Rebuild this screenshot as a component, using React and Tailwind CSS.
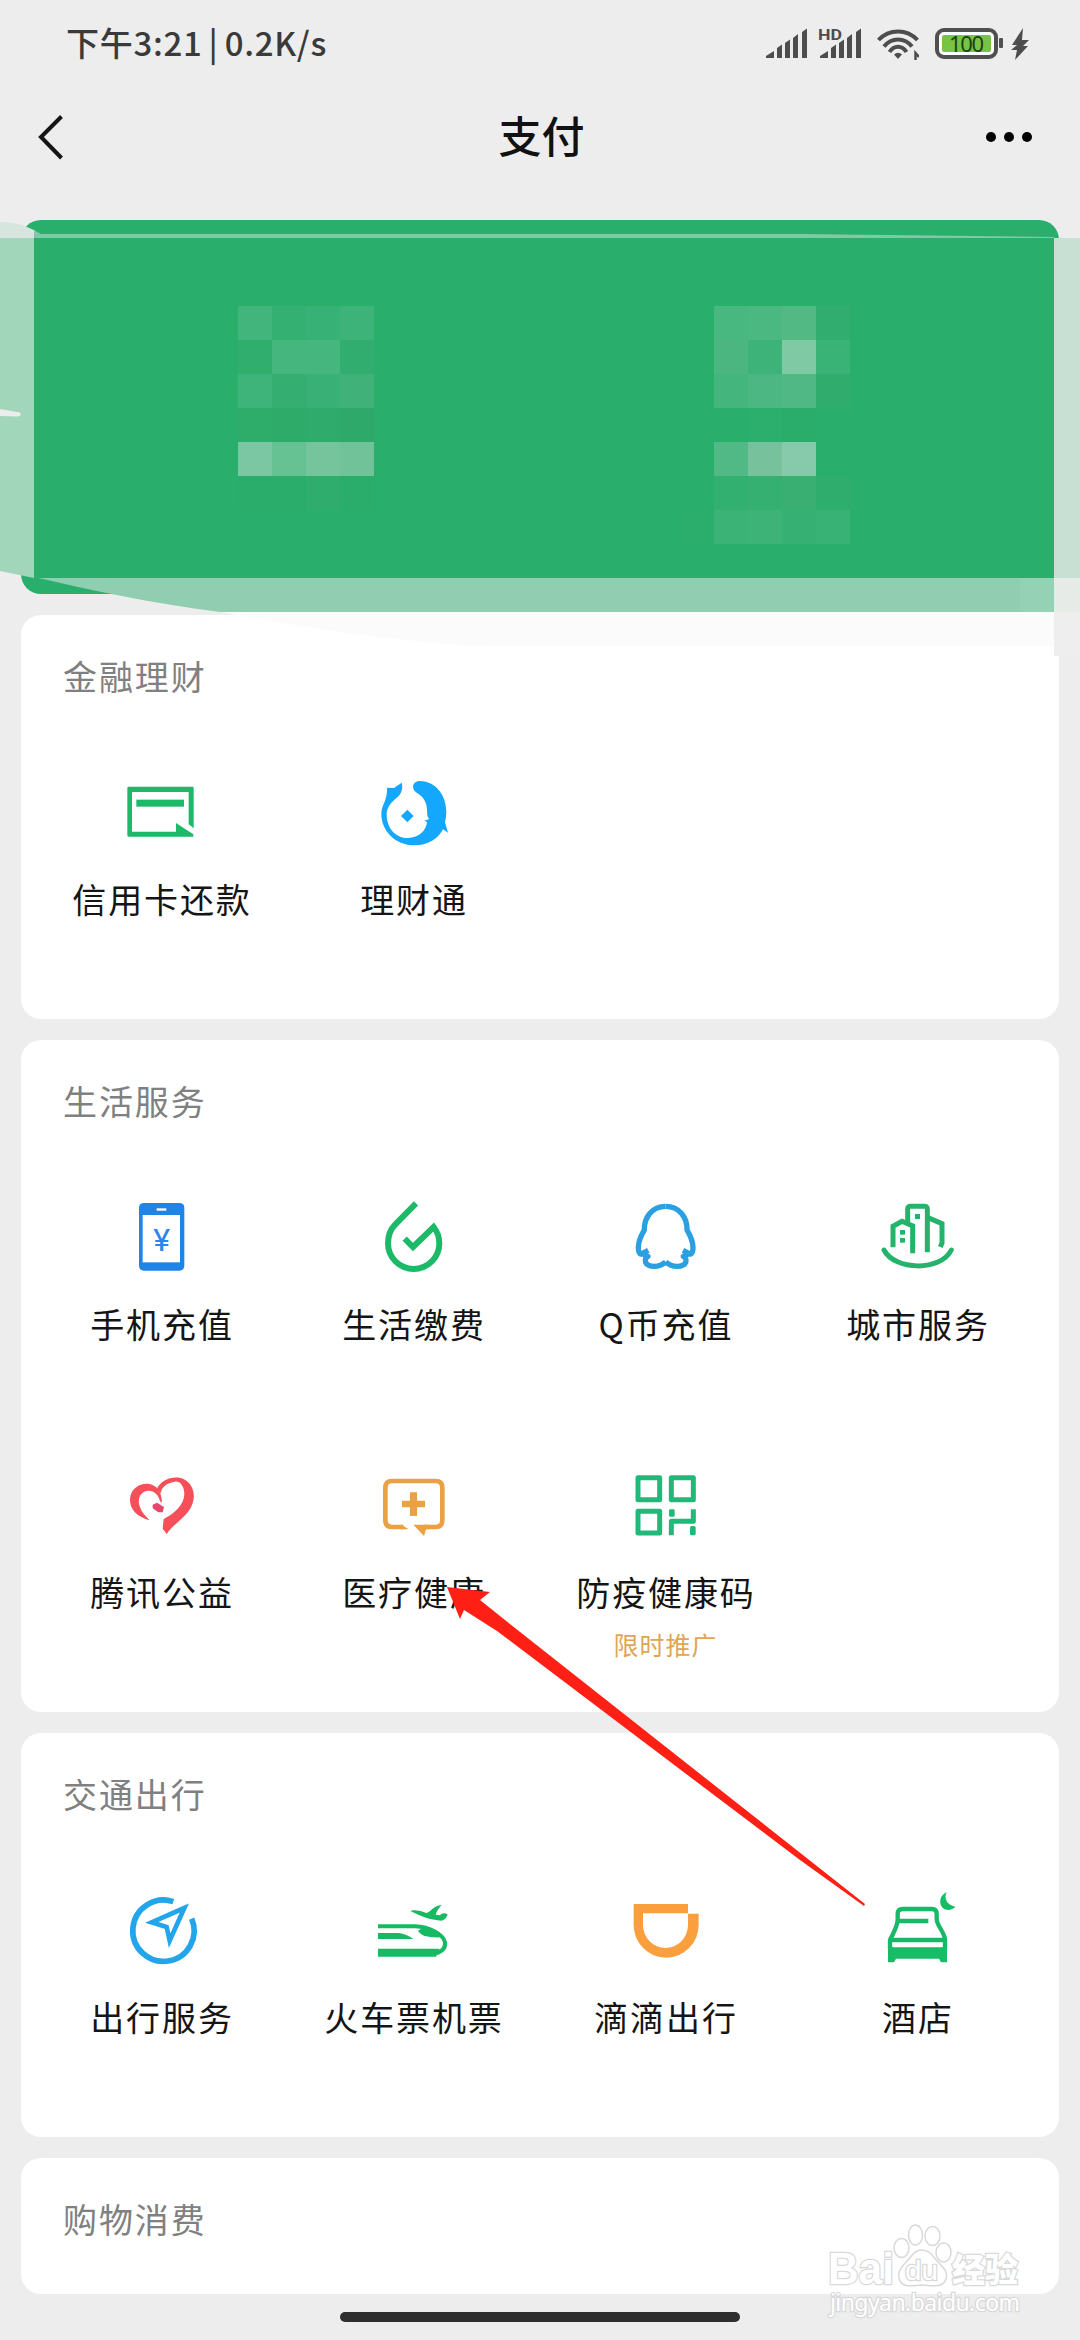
import React from 'react';

const GREEN = '#1bb968';

const CreditCardIcon = () => (
    <svg viewBox="243 399 240 240" className="h-20 w-20" fill={GREEN}>
        <path d="M266 443H458Q461 443 461 447V568L446 556V459H276V578H408V552L460 586V593H266Q262 593 262 589V447Q262 443 266 443Z" />
        <rect x="289" y="482" width="143" height="21" />
    </svg>
);

const WealthIcon = () => (
    <svg viewBox="999 399 240 240" className="h-20 w-20" fill="#13a8fd">
        <path d="M1041 446L1062 447L1085 431C1090 448 1084 464 1072 475C1055 490 1039 503 1040 530C1042 570 1068 597 1104 597C1138 596 1158 575 1161 549L1153 545L1168 540C1159 533 1163 520 1160 502C1155 479 1143 470 1128 460C1113 448 1117 426 1140 426C1190 428 1219 470 1219 520C1219 530 1217 540 1215 550L1224 581L1209 571C1194 601 1162 619 1124 619C1064 618 1024 575 1024 524C1024 498 1043 484 1041 446Z" />
        <path d="M1102 512L1121 531L1102 550L1083 531Z" />
    </svg>
);

const PhoneIcon = () => (
    <svg viewBox="213 411 240 240" className="h-20 w-20">
        <rect x="267" y="429" width="136" height="203" rx="14" fill="#1e84e6" />
        <rect x="278" y="465" width="112" height="142" fill="#fff" />
        <rect x="320" y="445" width="29" height="7" fill="#fff" />
        <text x="335" y="574" textAnchor="middle" fontSize="96" fontWeight="400" fill="#2b84f4" fontFamily="Roboto, sans-serif">¥</text>
    </svg>
);

const UtilityIcon = () => (
    <svg viewBox="969 411 240 240" className="h-20 w-20" fill="none" stroke={GREEN} strokeWidth="18">
        <path d="M1098 430L1036 493C1021 508 1014 528 1014 550A77 77 0 1 0 1168 550C1168 531 1162 515 1151 501L1089 561L1064 536" />
    </svg>
);

const PENGUIN_SIDE = 'M317 79C276 79 252 112 253 150C246 162 235 180 235 203C235 216 239 225 246 221L265 211M246 221L264 229C250 236 252 259 283 259C300 259 309 253 317 246';

const QCoinIcon = () => (
    <svg viewBox="195 51 240 240" className="h-20 w-20" fill="none" stroke="#2a9fe2" strokeWidth="16" strokeLinejoin="round">
        <path d={PENGUIN_SIDE} />
        <path d={PENGUIN_SIDE} transform="translate(634 0) scale(-1 1)" />
    </svg>
);

const CityIcon = () => (
    <svg viewBox="951 51 240 240" className="h-20 w-20" fill="none" stroke="#23b36b" strokeWidth="15">
        <path d="M999 202V139L1026 124L1058 138V220" />
        <path d="M1043 126V88Q1043 79 1052 79H1093Q1102 79 1102 88V217" />
        <path d="M1104 113L1146 131V189L1141 201" />
        <path d="M972 210C1004 272 1142 275 1174 210" strokeLinecap="round" />
        <g fill="#23b36b" stroke="none">
            <rect x="1065" y="102" width="15" height="15" />
            <rect x="1020" y="150" width="15" height="14" />
            <rect x="1020" y="174" width="15" height="14" />
        </g>
    </svg>
);

const CharityIcon = () => (
    <svg viewBox="213 45 240 240" className="h-20 w-20" fill="#f5505a">
        <path d="M299 211C262 200 239 180 240 146C243 115 270 98 298 102C320 106 335 124 336 158L330 154C326 134 312 121 294 122C270 124 263 146 268 165C273 185 285 196 299 211Z" />
        <path d="M320 118C332 90 362 79 388 83C417 88 435 116 431 146C424 197 375 214 350 252L338 236L341 207C374 190 402 165 403 132C403 112 392 92 374 95C350 99 335 111 332 130Z" />
        <path d="M308 164L321 158L342 171L338 187H325L308 175Z" fill="#e5486c" />
    </svg>
);

const MedicalIcon = () => (
    <svg viewBox="969 45 240 240" className="h-20 w-20" fill="#eca044">
        <path d="M1060 231H1026Q1006 231 1006 211V113Q1006 93 1026 93H1157Q1177 93 1177 113V211Q1177 231 1157 231H1122" fill="none" stroke="#eca044" strokeWidth="14" />
        <path d="M1054 224L1076 238H1054Z" />
        <path d="M1090 224H1136V238H1128L1122 258Z" />
        <path d="M1080 127H1101V152H1125V172H1101V198H1080V172H1056V152H1080Z" />
    </svg>
);

const HealthCodeIcon = () => (
    <svg viewBox="255 45 240 240" className="h-20 w-20" fill="none" stroke="#1fba79" strokeWidth="15" strokeLinejoin="round">
        <rect x="294" y="83" width="65" height="66" />
        <rect x="394" y="83" width="66" height="66" />
        <rect x="294" y="184" width="65" height="65" />
        <path d="M394 256V214H460V178" />
        <g fill="#1fba79" stroke="none">
            <rect x="387" y="178" width="17" height="22" rx="4" />
            <rect x="450" y="228" width="17" height="28" rx="5" />
        </g>
    </svg>
);

const TravelIcon = () => (
    <svg viewBox="213 450 240 240" className="h-20 w-20" fill="none" stroke="#22a5ea">
        <path d="M370 485A92 92 0 1 0 425 536" strokeWidth="17" />
        <path d="M403 504L305 547L350 561L359 602Z" strokeWidth="14" />
    </svg>
);

const TrainIcon = () => (
    <svg viewBox="969 450 240 240" className="h-20 w-20" fill="#17ba62">
        <path d="M984 559H1095C1140 560 1179 584 1185 606C1188 624 1176 634 1158 640" fill="none" stroke="#17ba62" strokeWidth="12" />
        <path d="M1104 573C1110 562 1135 563 1150 574L1173 592C1150 593 1116 592 1104 573Z" />
        <path d="M984 579H1046C1062 580 1076 588 1090 597H984Z" />
        <path d="M984 626H1168L1158 650H984Z" />
        <path d="M1081 513C1090 508 1115 512 1129 519C1145 514 1150 497 1175 495C1167 503 1160 514 1157 524L1170 526C1175 519 1184 517 1193 523C1190 533 1184 540 1175 542C1140 540 1110 528 1081 513Z" />
    </svg>
);

const DidiIcon = () => (
    <svg viewBox="195 90 240 240" className="h-20 w-20" fill="#f99f3e">
        <path d="M221 132H384V161H416V195A97.500 98 0 0 1 221 195ZM249 160V195A67.500 69 0 0 0 384 195V160Z" fillRule="evenodd" />
    </svg>
);

const HotelIcon = () => (
    <svg viewBox="951 90 240 240" className="h-20 w-20" fill="none" stroke="#17b868" strokeWidth="13">
        <path d="M990 268V240C1000 218 1013 200 1013 178V162Q1013 147 1028 147H1116Q1130 147 1130 162V178C1132 200 1155 218 1155 240V268" />
        <path d="M1015 183H1105M990 240H1155" />
        <g fill="#17bd66" stroke="none">
            <path d="M984 255L1000 262H1146L1161 255V307H1143L1137 296H1008L1002 307H984Z" />
            <path d="M1160 97C1151 115 1160 136 1186 140C1170 157 1145 151 1141 130C1139 115 1147 102 1160 97Z" />
        </g>
    </svg>
);

const SECTIONS = [
    {
        title: '金融理财',
        items: [
            { label: '信用卡还款', icon: CreditCardIcon },
            { label: '理财通', icon: WealthIcon }
        ]
    },
    {
        title: '生活服务',
        items: [
            { label: '手机充值', icon: PhoneIcon },
            { label: '生活缴费', icon: UtilityIcon },
            { label: 'Q币充值', icon: QCoinIcon },
            { label: '城市服务', icon: CityIcon },
            { label: '腾讯公益', icon: CharityIcon },
            { label: '医疗健康', icon: MedicalIcon },
            { label: '防疫健康码', icon: HealthCodeIcon, note: '限时推广' }
        ]
    },
    {
        title: '交通出行',
        items: [
            { label: '出行服务', icon: TravelIcon },
            { label: '火车票机票', icon: TrainIcon },
            { label: '滴滴出行', icon: DidiIcon },
            { label: '酒店', icon: HotelIcon }
        ]
    },
    { title: '购物消费', items: [] }
];

// Each block is one 34px cell row: x, y and the colours from left to right
const MOSAIC_ROWS = [
    { x: 238, y: 306, colors: ['#41b57b', '#33b072', '#38b176', '#3db379'] },
    { x: 238, y: 340, colors: ['#30ae6e', '#46b67f', '#46b67f', '#31ae6f'] },
    { x: 238, y: 374, colors: ['#3eb47a', '#35ae72', '#39b075', '#40b178'] },
    { x: 238, y: 408, colors: ['#2dac6a', '#2eaa69', '#2fab6b', '#2fa96a'] },
    { x: 238, y: 442, colors: ['#7bc7a4', '#66c193', '#76c49c', '#72c299'] },
    { x: 238, y: 476, colors: ['#2aad6a', '#2aad6a', '#2fad6c', '#2aad6b'] },
    { x: 714, y: 306, colors: ['#48b780', '#4bb781', '#52b985', '#31ae6f'] },
    { x: 714, y: 340, colors: ['#4bb680', '#3db379', '#7fc9a5', '#3ab376'] },
    { x: 714, y: 374, colors: ['#44b57c', '#4cb783', '#4fb884', '#30ad6d'] },
    { x: 748, y: 408, colors: ['#2cae6d', '#2aad6b'] },
    { x: 714, y: 442, colors: ['#51b985', '#77c29c', '#87caab'] },
    { x: 680, y: 476, colors: ['#2aae6c', '#32b070', '#36b071', '#39af72', '#2fad6d'] },
    { x: 680, y: 510, colors: ['#2bad6b', '#3bb276', '#3db377', '#37b173', '#39b275'] }
];

const SignalIcon = ({ hd }) => (
    <svg viewBox="0 0 42 32" className="h-8 w-[42px] overflow-visible" fill="#4d4d4d">
        {hd && (
            <text x="-2" y="12" fontSize="15" fontWeight="700" textLength="24" lengthAdjust="spacingAndGlyphs" fontFamily="Roboto, sans-serif">HD</text>
        )}
        <path d="M0 30V28L8 23V30Z" />
        <path d="M11 30V20L16 16.500V30Z" />
        <path d="M19 30V15L24 11.500V30Z" />
        <path d="M27 30V10L32 6V30Z" />
        <path d="M36 30V4L41 0.500V30Z" />
    </svg>
);

const WifiIcon = () => (
    <svg viewBox="0 0 42 32" className="h-8 w-[42px]" fill="none" stroke="#4d4d4d" strokeWidth="4">
        <path d="M1.500 12C12 0.500 30 0.500 40.500 12" />
        <path d="M7 18.500C14.500 9 27.500 9 35 18.500" />
        <path d="M12.500 24C17 17 25 17 29.500 24" />
        <path d="M17 26.500Q21 23 25 26.500L21 31Z" fill="#4d4d4d" stroke="none" />
        <path d="M38.500 32V25L42 29" strokeWidth="2.500" />
    </svg>
);

const BatteryIcon = () => (
    <svg viewBox="0 0 68 32" className="h-8 w-[68px]">
        <rect x="2" y="2" width="59" height="27" rx="7" fill="#fff" stroke="#505050" strokeWidth="4" />
        <rect x="7" y="7" width="49" height="17" rx="2" fill="#76c442" />
        <rect x="64" y="10" width="4" height="10" rx="1" fill="#505050" />
        <text x="31.500" y="23.500" textAnchor="middle" fontSize="22" textLength="35" fill="#1d3f12" fontFamily="'Noto Sans', sans-serif">100</text>
    </svg>
);

const StatusBar = () => (
    <div className="flex h-[88px] items-center justify-between pl-[66px] pr-[51px]">
        <span className="-mt-[3px] text-[33px] font-medium tracking-[0.7px] text-[#3a3a3a] [word-spacing:-2px]">
            下午3:21 | 0.2K/s
        </span>
        <div className="flex items-center">
            <SignalIcon />
            <div className="ml-3">
                <SignalIcon hd />
            </div>
            <div className="ml-[15px]">
                <WifiIcon />
            </div>
            <div className="ml-4">
                <BatteryIcon />
            </div>
            <svg viewBox="0 0 18 32" className="ml-2 h-8 w-[18px]" fill="#4d4d4d">
                <path d="M12 0L1 17H6L0 22H6L4 32L17 18H12L18 12H11Z" />
            </svg>
        </div>
    </div>
);

const NavBar = () => (
    <div className="mb-[34px] flex h-[98px] items-center justify-between pl-9 pr-12">
        <svg viewBox="0 0 30 48" className="h-12 w-[30px]" fill="none" stroke="#161616" strokeWidth="4">
            <path d="M25.500 3.500L5 24L25.500 45" />
        </svg>
        <h1 className="-mt-[5px] ml-[31px] text-[43px] font-medium text-[#111]">支付</h1>
        <div className="flex gap-2">
            <span className="h-[10px] w-[10px] rounded-full bg-black" />
            <span className="h-[10px] w-[10px] rounded-full bg-black" />
            <span className="h-[10px] w-[10px] rounded-full bg-black" />
        </div>
    </div>
);

// Smudged and pixelated balance area on top of the green wallet card
const WalletMosaic = () => (
    <svg viewBox="0 220 1080 440" className="absolute left-0 top-0 h-[440px] w-[1080px]">
        <path d="M0 222Q16 222 27 227L34 230L41 238H0Z" fill="#d6e5dd" />
        <path d="M34 230L41 234H800L1054 237V239H34Z" fill="#7fcaa5" />
        <path d="M220 612H1054V646H490C420 644 320 631 220 612Z" fill="#fbfbfb" />
        <path d="M34 577C90 590 150 603 220 612H1054V578H34Z" fill="#91cdb0" />
        <rect x="1020" y="578" width="34" height="34" fill="#95d1b5" />
        <path d="M0 238H34V578L0 571Z" fill="#a1d6bb" />
        <path d="M0 409L20 412.500Q22 416 18 416.500L0 416Z" fill="#ececec" />
        <rect x="34" y="238" width="1020" height="340" fill="#29ae6c" />
        <rect x="1054" y="238" width="26" height="340" fill="#c8dfd4" />
        <rect x="1054" y="578" width="26" height="34" fill="#e6ebe8" />
        <rect x="1054" y="612" width="26" height="44" fill="#eeeeee" />
        {MOSAIC_ROWS.map((row) =>
            row.colors.map((color, i) => (
                <rect key={`${row.x}-${row.y}-${i}`} x={row.x + i * 34} y={row.y} width="34" height="34" fill={color} />
            ))
        )}
    </svg>
);

const ServiceItem = ({ item }) => {
    const Icon = item.icon;

    return (
        <div className="flex h-[268px] flex-col items-center pt-[33px]">
            <Icon />
            <span className="mt-[25px] whitespace-nowrap pl-[2px] text-[34px] leading-[44px] tracking-[1.9px] text-[#151515]">
                {item.label}
            </span>
            {item.note && (
                <span className="mt-[14px] pl-px text-[25px] leading-8 tracking-[1px] text-[#e0a552]">{item.note}</span>
            )}
        </div>
    );
};

const ServiceSection = ({ section }) => (
    <section className="shrink-0 rounded-[20px] bg-white pb-3 pl-[14px] pr-4">
        <h2 className="h-[124px] pl-7 pt-[39px] text-[34px] leading-[44px] tracking-[1.9px] text-[#808080]">
            {section.title}
        </h2>
        <div className="grid grid-cols-4">
            {section.items.map((item) => (
                <ServiceItem key={item.label} item={item} />
            ))}
        </div>
    </section>
);

const PointerArrow = () => (
    <svg viewBox="440 1580 430 330" className="absolute left-[440px] top-[1580px] h-[330px] w-[430px]">
        <path d="M447 1587L490 1592L480 1600L515 1628L865 1904L864 1906L800 1860L497 1631L464 1610L460 1619Z" fill="#fe2015" />
    </svg>
);

const Watermark = () => (
    <svg
        viewBox="820 2220 210 110"
        className="absolute left-[820px] top-[2220px] h-[110px] w-[210px]"
        fill="#fff"
        stroke="#d9d9d9"
        strokeWidth="1.500"
    >
        <text x="828" y="2284" fontSize="44" fontWeight="700" textLength="66" lengthAdjust="spacingAndGlyphs" fontFamily="'Liberation Sans', sans-serif" strokeWidth="2.500" paintOrder="stroke">Bai</text>
        <ellipse cx="901.500" cy="2248" rx="7.500" ry="9.500" />
        <ellipse cx="915.500" cy="2235" rx="7" ry="10" />
        <ellipse cx="932.500" cy="2236" rx="7.500" ry="9.500" />
        <ellipse cx="943.500" cy="2252.500" rx="7.500" ry="9.500" />
        <path d="M922 2250C930 2250 933 2257 938 2262C944 2268 948 2272 946 2279C943 2288 933 2286 922 2285C911 2286 901 2288 899 2278C897 2270 903 2266 907 2261C912 2256 914 2250 922 2250Z" />
        <text x="905" y="2280" fontSize="28" textLength="33" lengthAdjust="spacingAndGlyphs" fontFamily="'Liberation Sans', sans-serif" strokeWidth="2.500" paintOrder="stroke">du</text>
        <text x="952" y="2282" fontSize="33" fontWeight="900" textLength="66" fontFamily="'Noto Sans CJK SC', sans-serif" strokeWidth="2.500" paintOrder="stroke">经验</text>
        <text x="830" y="2311" fontSize="23" textLength="190" fontFamily="'Noto Sans', sans-serif" strokeWidth="2.500" paintOrder="stroke">jingyan.baidu.com</text>
    </svg>
);

export default function App() {
    return (
        <div className="relative flex h-[2340px] w-[1080px] flex-col overflow-hidden bg-[#ededed] font-['Noto_Sans_CJK_SC',sans-serif]">
            <StatusBar />
            <NavBar />

            <main className="relative flex h-[2075px] flex-col gap-[21px] overflow-hidden px-[21px]">
                <div className="h-[374px] shrink-0 rounded-[20px] bg-[#29ae6c]" />
                {SECTIONS.map((section) => (
                    <ServiceSection key={section.title} section={section} />
                ))}
                <WalletMosaic />
            </main>

            {/* Gesture bar */}
            <footer className="flex flex-1 items-start justify-center pt-[17px]">
                <div className="h-[10px] w-[400px] rounded-full bg-[#2e2e2e]" />
            </footer>

            <PointerArrow />
            <Watermark />
        </div>
    );
}
